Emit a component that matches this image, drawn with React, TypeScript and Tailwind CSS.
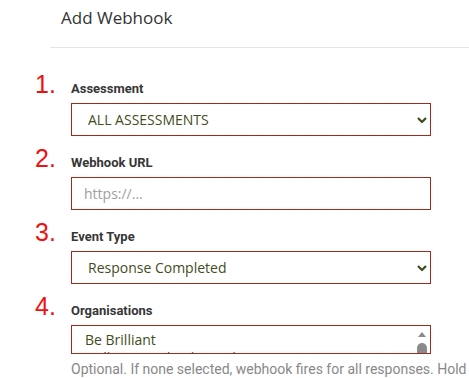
const fieldFont = { fontFamily: 'Roboto, "Liberation Sans", sans-serif' }
const optionFont = { fontFamily: '"Open Sans", sans-serif' }

const Chevron = () => (
  <svg
    className="pointer-events-none absolute right-[4px] top-1/2 -translate-y-1/2"
    width="10"
    height="7"
    viewBox="0 0 10 7"
    fill="none"
  >
    <path d="M1 1.5l4 4 4-4" stroke="#3e4a1c" strokeWidth="2.2" />
  </svg>
)

const LabelRow = ({ num, label }) => (
  <div className="flex h-[24px] items-baseline">
    <span
      className="w-[36px] text-[25px] leading-[20px] text-[#f01010]"
      style={{ fontFamily: '"Liberation Sans", Arial, sans-serif' }}
    >
      {num}.
    </span>
    <span
      className="text-[13px] font-bold leading-[20px] text-[#363636]"
      style={fieldFont}
    >
      {label}
    </span>
  </div>
)

const Field = ({ num, label, children }) => (
  <div className="mb-[12px]">
    <LabelRow num={num} label={label} />
    <div className="ml-[36px] mt-[5px]">{children}</div>
  </div>
)

const SelectBox = ({ value }) => (
  <div className="relative w-[360px]">
    <select
      defaultValue={value}
      className="block h-[33px] w-full appearance-none border border-[#9e2b1d] bg-white pl-[16px] text-[14px] text-[#434d22] outline-none"
      style={optionFont}
    >
      <option>{value}</option>
    </select>
    <Chevron />
  </div>
)

export default function App() {
  return (
    <div className="h-[378px] w-[469px] overflow-hidden bg-white">
      <div className="ml-[50px] border-b border-[#e6e6e6] pb-[17px] pl-[11px] pt-[6px]">
        <h1 className="text-[17px] leading-[24px] text-[#333]" style={optionFont}>
          Add Webhook
        </h1>
      </div>

      <form className="pl-[35px] pt-[26px]">
        <Field num={1} label="Assessment">
          <SelectBox value="ALL ASSESSMENTS" />
        </Field>

        <Field num={2} label="Webhook URL">
          <input
            placeholder="https://..."
            className="block h-[33px] w-[360px] border border-[#9e2b1d] bg-white pl-[12px] text-[14px] text-[#434d22] outline-none placeholder:text-[#a0a0a0]"
            style={optionFont}
          />
        </Field>

        <Field num={3} label="Event Type">
          <SelectBox value="Response Completed" />
        </Field>

        <div>
          <LabelRow num={4} label="Organisations" />
          <div className="ml-[36px] mt-[5px]">
            <div className="flex h-[29px] w-[360px] overflow-hidden border border-[#9e2b1d] bg-white">
              <ul
                className="h-[27px] flex-1 overflow-hidden pl-[13px] pt-[5px] text-[14px] leading-[18px] text-[#434d22]"
                style={optionFont}
              >
                <li>Be Brilliant</li>
                <li>Brilliant Leadership Ltd</li>
              </ul>
              <div className="mr-[3px] flex w-[10px] flex-col items-center pt-[6px]">
                <div className="h-0 w-0 border-x-[4px] border-b-[5px] border-x-transparent border-b-[#8a8a8a]" />
                <div className="mt-[6px] h-[12px] w-[10px] rounded-t-[5px] bg-[#8a8a8a]" />
              </div>
            </div>
            <p
              className="mt-[5px] whitespace-nowrap text-[14px] leading-[20px] text-[#888]"
              style={fieldFont}
            >
              Optional. If none selected, webhook fires for all responses. Hold
            </p>
          </div>
        </div>
      </form>
    </div>
  )
}
